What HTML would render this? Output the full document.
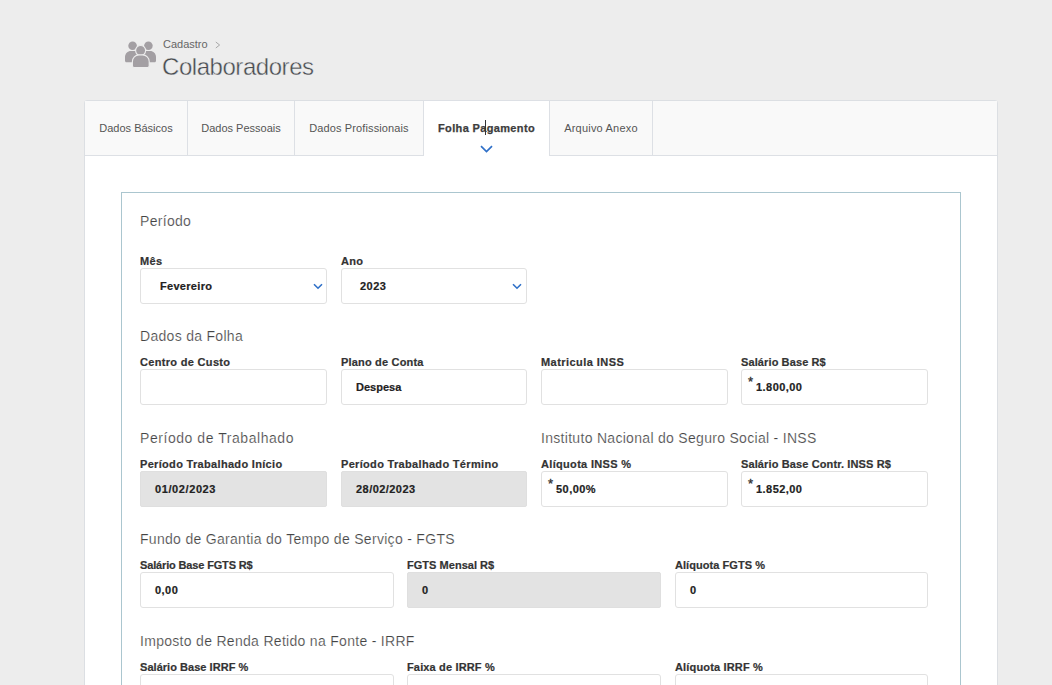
<!DOCTYPE html>
<html><head><meta charset="utf-8">
<style>
*{box-sizing:border-box;margin:0;padding:0}
html,body{width:1052px;height:685px;overflow:hidden;background:#ededed;font-family:"Liberation Sans",sans-serif;}
.abs{position:absolute}
#hdr-icon{left:120px;top:36px;width:42px;height:36px}
#crumb{left:163px;top:37px;font-size:11px;color:#666;line-height:14px}
#crumb .chev{color:#aaa;margin-left:6px}
#title{left:162px;top:53px;font-size:24px;color:#474b50;line-height:28px;font-weight:normal;letter-spacing:-0.45px;-webkit-text-stroke:0.4px #ededed}
#card{left:84px;top:100px;width:914px;height:600px;background:#fff;border:1px solid #dcdfe3;border-radius:3px}
#tabs{left:85px;top:101px;width:912px;height:55px;background:#f9f9f9;border-bottom:1px solid #dde0e5}
.tab{position:absolute;top:0;height:55px;font-size:11px;color:#555;line-height:55px;text-align:center;border-right:1px solid #dde0e5}
.tab.active{background:#fff;height:56px;color:#3d3d3d;font-weight:bold;border-left:1px solid #dde0e5;top:-1px;border-top:1px solid #dde0e5;letter-spacing:0.35px;-webkit-text-stroke:0.25px #3d3d3d}
#panel{left:121px;top:192px;width:840px;height:600px;border:1px solid #abc6cf;background:#fff}
.sec{position:absolute;left:140px;font-size:14px;color:#444;line-height:18px;letter-spacing:0.3px;-webkit-text-stroke:0.2px #fff}
.lbl{position:absolute;font-size:11px;font-weight:bold;color:#333;line-height:14px;letter-spacing:0.32px;-webkit-text-stroke:0.2px #333}
.inp{position:absolute;height:36px;border:1px solid #e1e1e1;border-radius:3px;background:#fff;font-size:11px;font-weight:bold;color:#222;line-height:34px;padding-left:14px;letter-spacing:0.45px;-webkit-text-stroke:0.2px #222}
.inp.dis{background:#e3e3e3;border-color:#dfdfdf;border-radius:2px}
.star{position:absolute;left:6px;top:-5px;font-size:13px;font-weight:normal;letter-spacing:0;-webkit-text-stroke:0.35px #333;color:#333}
.chev{position:absolute;width:9px;height:6px}
#caret{left:485px;top:120px;width:1px;height:15px;background:#333}
</style></head><body>
<svg class="abs" id="hdr-icon" viewBox="0 0 42 36">
  <g fill="#a39fa3">
    <circle cx="12.6" cy="9.7" r="4.3"/>
    <circle cx="28.4" cy="9.7" r="4.3"/>
    <path d="M5 24.8 L5 21 C5 17.6 7.6 15 11 15 L14.5 15 C17.5 15 19 16.5 20 18 L20 26.3 L6.4 26.3 C5.6 26.3 5 25.7 5 24.8 Z"/>
    <path d="M36 24.8 L36 21 C36 17.6 33.4 15 30 15 L26.5 15 C23.5 15 22 16.5 21 18 L21 26.3 L34.6 26.3 C35.4 26.3 36 25.7 36 24.8 Z"/>
    <circle cx="20.6" cy="14.5" r="5" stroke="#ededed" stroke-width="1.1"/>
    <path d="M12.4 29.8 L12.4 25.5 C12.4 21.7 15.3 18.9 19 18.9 L22.6 18.9 C26.3 18.9 29.2 21.7 29.2 25.5 L29.2 29.8 C29.2 30.9 28.4 31.6 27.3 31.6 L14.3 31.6 C13.2 31.6 12.4 30.9 12.4 29.8 Z" stroke="#ededed" stroke-width="1.1"/>
  </g>
</svg>
<div class="abs" id="crumb">Cadastro</div>
<svg class="abs" style="left:214px;top:40.5px;width:8px;height:8px" viewBox="0 0 8 8"><path d="M1.8 1 L5.6 4 L1.8 7" fill="none" stroke="#a8a8a8" stroke-width="1"/></svg>
<div class="abs" id="title">Colaboradores</div>

<div class="abs" id="card"></div>
<div class="abs" id="tabs">
  <div class="tab" style="left:0;width:103px">Dados Básicos</div>
  <div class="tab" style="left:103px;width:107px">Dados Pessoais</div>
  <div class="tab" style="left:210px;width:129px;letter-spacing:0.12px">Dados Profissionais</div>
  <div class="tab active" style="left:338px;width:127px">Folha Pagamento</div>
  <div class="tab" style="left:465px;width:103px;letter-spacing:0.2px">Arquivo Anexo</div>
</div>

<div class="abs" id="panel"></div>

<div class="sec" style="top:212px">Período</div>
<div class="lbl" style="left:140px;top:254px">Mês</div>
<div class="inp" style="left:140px;top:268px;width:187px;padding-left:19px;letter-spacing:0.3px">Fevereiro</div>
<div class="lbl" style="left:341px;top:254px">Ano</div>
<div class="inp" style="left:341px;top:268px;width:186px;padding-left:18px">2023</div>

<div class="sec" style="top:327px">Dados da Folha</div>
<div class="lbl" style="left:140px;top:355px">Centro de Custo</div>
<div class="inp" style="left:140px;top:369px;width:187px"></div>
<div class="lbl" style="left:341px;top:355px;letter-spacing:0.18px">Plano de Conta</div>
<div class="inp" style="left:341px;top:369px;width:186px;letter-spacing:0">Despesa</div>
<div class="lbl" style="left:541px;top:355px;letter-spacing:0.45px">Matricula INSS</div>
<div class="inp" style="left:541px;top:369px;width:187px"></div>
<div class="lbl" style="left:741px;top:355px;letter-spacing:0.11px">Salário Base R$</div>
<div class="inp" style="left:741px;top:369px;width:187px"><span class="star">*</span>1.800,00</div>

<div class="sec" style="top:429px;letter-spacing:0.55px">Período de Trabalhado</div>
<div class="sec" style="left:541px;top:429px">Instituto Nacional do Seguro Social - INSS</div>
<div class="lbl" style="left:140px;top:457px">Período Trabalhado Início</div>
<div class="inp dis" style="left:140px;top:471px;width:187px;letter-spacing:0.6px">01/02/2023</div>
<div class="lbl" style="left:341px;top:457px">Período Trabalhado Término</div>
<div class="inp dis" style="left:341px;top:471px;width:186px">28/02/2023</div>
<div class="lbl" style="left:541px;top:457px">Alíquota INSS %</div>
<div class="inp" style="left:541px;top:471px;width:187px"><span class="star">*</span>50,00%</div>
<div class="lbl" style="left:741px;top:457px;letter-spacing:0.12px">Salário Base Contr. INSS R$</div>
<div class="inp" style="left:741px;top:471px;width:187px"><span class="star">*</span>1.852,00</div>

<div class="sec" style="top:530px">Fundo de Garantia do Tempo de Serviço - FGTS</div>
<div class="lbl" style="left:140px;top:558px;letter-spacing:-0.15px">Salário Base FGTS R$</div>
<div class="inp" style="left:140px;top:572px;width:254px">0,00</div>
<div class="lbl" style="left:407px;top:558px;letter-spacing:0.03px">FGTS Mensal R$</div>
<div class="inp dis" style="left:407px;top:572px;width:254px">0</div>
<div class="lbl" style="left:675px;top:558px;letter-spacing:0.06px">Alíquota FGTS %</div>
<div class="inp" style="left:675px;top:572px;width:253px">0</div>

<div class="sec" style="top:632px">Imposto de Renda Retido na Fonte - IRRF</div>
<div class="lbl" style="left:140px;top:660px;letter-spacing:0.04px">Salário Base IRRF %</div>
<div class="inp" style="left:140px;top:674px;width:254px"></div>
<div class="lbl" style="left:407px;top:660px;letter-spacing:0.15px">Faixa de IRRF %</div>
<div class="inp" style="left:407px;top:674px;width:254px"></div>
<div class="lbl" style="left:675px;top:660px;letter-spacing:0.16px">Alíquota IRRF %</div>
<div class="inp" style="left:675px;top:674px;width:253px"></div>
<svg class="abs" style="left:313px;top:283px;width:10px;height:7px" viewBox="0 0 10 7"><path d="M1 1.2 L5 5.2 L9 1.2" fill="none" stroke="#2f70c8" stroke-width="1.6"/></svg>
<svg class="abs" style="left:512px;top:283px;width:10px;height:7px" viewBox="0 0 10 7"><path d="M1 1.2 L5 5.2 L9 1.2" fill="none" stroke="#2f70c8" stroke-width="1.6"/></svg>
<svg class="abs" style="left:480px;top:145px;width:13px;height:8px" viewBox="0 0 13 8"><path d="M1 1.2 L6.5 6.5 L12 1.2" fill="none" stroke="#2f70c8" stroke-width="1.7"/></svg>
<div class="abs" id="caret"></div>
</body></html>
